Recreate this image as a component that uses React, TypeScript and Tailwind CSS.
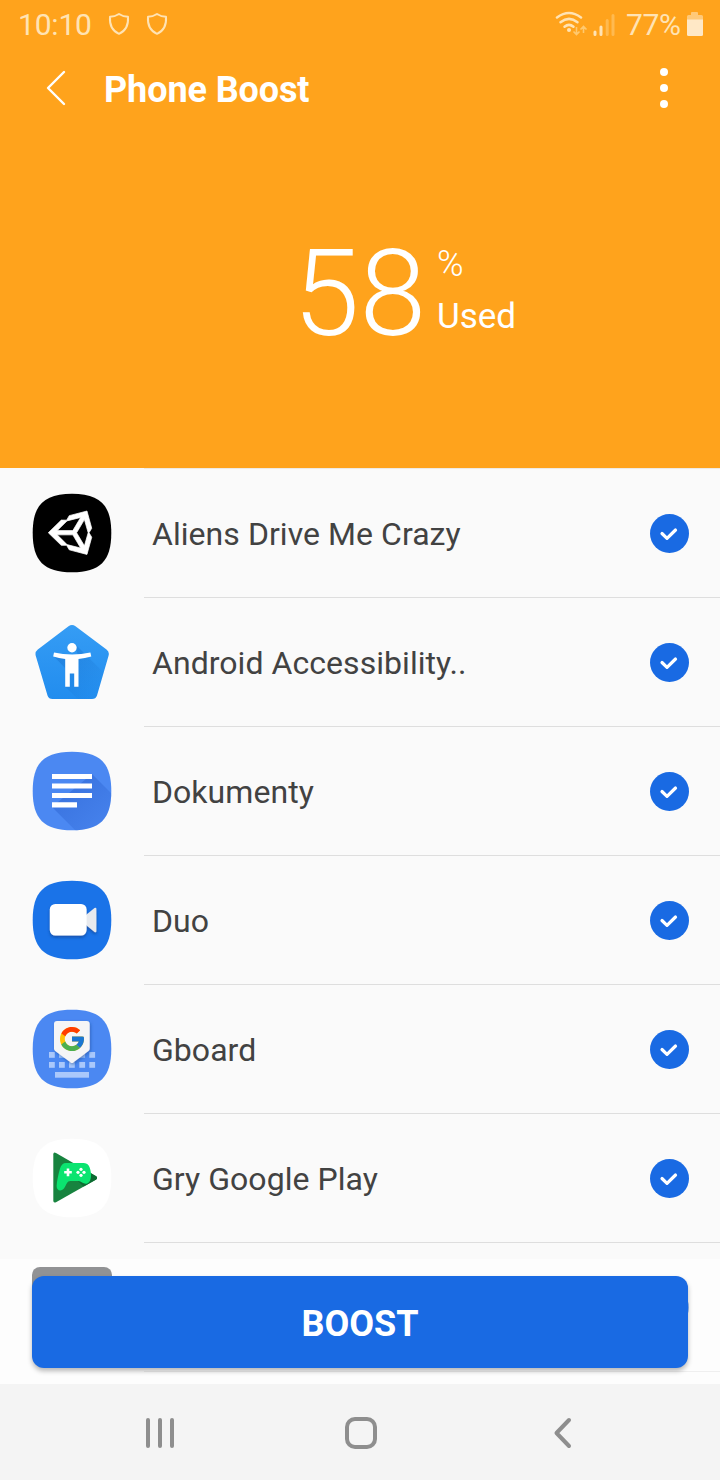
import type { ReactNode } from "react";
import { FcGoogle } from "react-icons/fc";

const SQUIRCLE =
  "M40 .7C68 .7 79.3 12 79.3 40S68 79.3 40 79.3.7 68 .7 40 12 .7 40 .7Z";

const UnityIcon = () => (
  <svg className="size-20" viewBox="0 0 80 80">
    <path d={SQUIRCLE} fill="#000" />
    <path
      transform="translate(14.9 16.7) scale(.09)"
      fill="#fff"
      stroke="#fff"
      strokeWidth="8"
      d="M498.11,206.4,445.31,14.72,248.2,66.08,219,116.14l-59.2-.43L15.54,256,159.82,396.32l59.17-.43,29.24,50,197.08,51.36,52.8-191.62-30-49.63ZM223.77,124.2,374.55,86.51,288,232.33H114.87Zm0,263.63L114.87,279.71H288l86.55,145.81Zm193,14L330.17,256l86.58-145.84L458.56,256Z"
    />
  </svg>
);

const AccessibilityIcon = () => (
  <svg className="size-20" viewBox="0 0 80 80">
    <defs>
      <linearGradient id="a11y-bg" x1="0" y1="0" x2="0" y2="1">
        <stop offset="0" stopColor="#369df5" />
        <stop offset="1" stopColor="#218cee" />
      </linearGradient>
      <linearGradient id="a11y-shade" x1="0" y1="0" x2="1" y2="1">
        <stop offset="0" stopColor="#1266c2" stopOpacity=".45" />
        <stop offset=".8" stopColor="#1266c2" stopOpacity="0" />
      </linearGradient>
      <clipPath id="a11y-clip">
        <path d="M36.5 4.3Q40 1.8 43.5 4.3L74.5 27.5Q77.8 30 76.5 34L65 73.5Q63.8 77 60 77H20.5Q16.7 77 15.5 73.5L3.8 34Q2.6 30 5.8 27.5Z" />
      </clipPath>
    </defs>
    <g clipPath="url(#a11y-clip)">
      <path d="M0 0H80V80H0Z" fill="url(#a11y-bg)" />
      <path d="M43 22 80 59V80H49L33 64.7V46L21.7 34.3H46Z" fill="url(#a11y-shade)" />
    </g>
    <circle cx="40" cy="25.7" r="4.7" fill="#fff" />
    <path
      fill="#fff"
      d="M22 30.6Q40 34.6 58.4 30.6L59.3 34.5Q53 36.2 46.5 37V64.7H42.2V51.5H37.8V64.7H33.2V37Q27 36.2 21.2 34.5Z"
    />
  </svg>
);

const DocsIcon = () => (
  <svg className="size-20" viewBox="0 0 80 80">
    <defs>
      <linearGradient id="docs-shade" x1="0" y1="0" x2="1" y2="1">
        <stop offset="0" stopColor="#3169d6" stopOpacity=".8" />
        <stop offset="1" stopColor="#3169d6" stopOpacity=".15" />
      </linearGradient>
      <clipPath id="docs-clip">
        <path d={SQUIRCLE} />
      </clipPath>
    </defs>
    <g clipPath="url(#docs-clip)">
      <path d="M0 0H80V80H0Z" fill="#4b88f2" />
      <path d="M60 23 80 43V80H44L20 56Z" fill="url(#docs-shade)" />
    </g>
    <path d="M20 23H60V28H20ZM20 32.4H60V37.5H20ZM20 42H60V47H20ZM20 51.3H45V56.4H20Z" fill="#fff" />
  </svg>
);

const DuoIcon = () => (
  <svg className="size-20" viewBox="0 0 80 80">
    <defs>
      <filter id="duo-shadow" x="-20%" y="-20%" width="140%" height="150%">
        <feDropShadow dx="0" dy="2" stdDeviation="1.6" floodColor="#0b3a85" floodOpacity=".6" />
      </filter>
    </defs>
    <path d={SQUIRCLE} fill="#1a73e8" />
    <g filter="url(#duo-shadow)">
      <path d="M54 35 62.5 28Q64.4 27 64.4 29V51Q64.4 53 62.5 52L54 45Z" fill="#e8eaee" />
      <rect x="17.8" y="24" width="36.8" height="31.5" rx="5.5" fill="#fff" />
    </g>
  </svg>
);

const GboardIcon = () => (
  <svg className="size-20" viewBox="0 0 80 80">
    <defs>
      <filter id="pin-shadow" x="-20%" y="-20%" width="150%" height="150%">
        <feDropShadow dx="1" dy="1.5" stdDeviation="1.5" floodColor="#17458f" floodOpacity=".5" />
      </filter>
    </defs>
    <path d={SQUIRCLE} fill="#4b88f2" />
    <g fill="#aac8fb">
      {[17, 27, 37, 47.3, 57.3].map((x) => (
        <g key={x}>
          <rect x={x} y="43" width="5.8" height="5.8" />
          <rect x={x} y="53" width="5.8" height="5.8" />
        </g>
      ))}
      <rect x="23" y="63" width="34" height="5.7" />
    </g>
    <path
      d="M25 12H54.7Q57.7 12 57.7 15V39.5Q57.7 41 56.5 42L41.3 53.6Q40 54.6 38.7 53.6L23.2 42Q22 41 22 39.5V15Q22 12 25 12Z"
      fill="#f5f5f6"
      filter="url(#pin-shadow)"
    />
    <FcGoogle x="25.6" y="15.6" size={28.8} />
  </svg>
);

const PlayGamesIcon = () => (
  <svg className="size-20" viewBox="0 0 80 80">
    <defs>
      <clipPath id="play-clip">
        <path d="M21.3 16.5Q21.3 13.5 24 15L64.2 38.3Q66 40 64.2 41.4L24 64.2Q21.3 65.5 21.3 62.5Z" />
      </clipPath>
    </defs>
    <path d={SQUIRCLE} fill="#fff" />
    <g clipPath="url(#play-clip)">
      <path d="M0 0H80V80H0Z" fill="#17833f" />
      <path d="M46 43 54 51 66 44V34H58Z" fill="#0d6b32" />
    </g>
    <path
      d="M34 25H51.5C56.5 25 58.3 29 58.9 35 59.5 40.5 58 45 54.5 45.7 51 46.2 49.5 43 46.5 43H38.5C35 43 34.5 46.5 32.3 50 30 53.5 24.6 53.5 24.6 48 24.8 43 26.5 36 28 30.5 29 27 31 25 34 25Z"
      fill="#0be470"
    />
    <path d="M34.7 30.5H37.3V33H39.8V35.6H37.3V38.2H34.7V35.6H32.2V33H34.7Z" fill="#fff" />
    <g fill="#fff">
      <circle cx="49" cy="31.3" r="1.6" />
      <circle cx="49" cy="37.3" r="1.6" />
      <circle cx="46" cy="34.3" r="1.6" />
      <circle cx="52" cy="34.3" r="1.6" />
    </g>
  </svg>
);

const apps: { name: string; icon: ReactNode }[] = [
  { name: "Aliens Drive Me Crazy", icon: <UnityIcon /> },
  { name: "Android Accessibility..", icon: <AccessibilityIcon /> },
  { name: "Dokumenty", icon: <DocsIcon /> },
  { name: "Duo", icon: <DuoIcon /> },
  { name: "Gboard", icon: <GboardIcon /> },
  { name: "Gry Google Play", icon: <PlayGamesIcon /> },
  { name: "", icon: <div className="size-20 rounded-lg bg-[#232529]" /> },
];

const Shield = () => (
  <svg className="h-6 w-[22px]" viewBox="0 0 22 24" fill="none" stroke="#ffe3b4" strokeWidth="2">
    <path d="M11 2Q15 4.6 20 4.8C20.6 13 17.5 19 11 21.8 4.5 19 1.4 13 2 4.8Q7 4.6 11 2Z" strokeLinejoin="round" />
  </svg>
);

const StatusBar = () => (
  <div className="flex h-12 items-center justify-between pr-4 pl-[18px] text-[#ffe3b4]">
    <div className="flex items-center">
      <span className="w-[90px] pt-0.5 text-[30px] leading-none tracking-[-0.2px]">10:10</span>
      <div className="flex gap-4">
        <Shield />
        <Shield />
      </div>
    </div>
    <div className="flex items-center">
      <svg className="h-8 w-[73px]" viewBox="0 0 73 32" fill="none">
        <g stroke="#ffe3b4" strokeWidth="2.5" strokeLinecap="round">
          <path d="M4 9.5Q16 .5 28 9.5" />
          <path d="M7.5 14.3Q16 7.5 24.5 14.3" />
          <path d="M11.5 18.8Q16 15 20.5 18.800" />
        </g>
        <circle cx="16" cy="22" r="2" fill="#ffe3b4" />
        <g stroke="#ffc96f" strokeWidth="1.6">
          <path d="M23.5 19V26M20.5 23.5 23.5 26.5 26.5 23.5M30.500 25V18.5M27.5 21.5 30.5 18.5 33.5 21.5" />
        </g>
        <g strokeWidth="3" strokeLinecap="round">
          <path d="M42 24V26.5M48 19V26.5" stroke="#ffe3b4" />
          <path d="M54.2 12.500V26.5M60 7.5V26.5" stroke="#ffba50" />
        </g>
      </svg>
      <span className="w-[60px] pt-0.5 text-[30px] leading-none tracking-[-0.4px]">77%</span>
      <svg className="h-6 w-[18px]" viewBox="0 0 18 24">
        <path d="M5 1Q5 0 6 0H11Q12 0 12 1V3H15.5Q17 3 17 4.5V8H1V4.5Q1 3 2.5 3H5Z" fill="#ffc978" />
        <path d="M1 7.5H17V22.5Q17 24 15.5 24H2.5Q1 24 1 22.5Z" fill="#ffe8c6" />
      </svg>
    </div>
  </div>
);

const AppRow = ({ name, icon }: { name: string; icon: ReactNode }) => (
  <li className="flex h-[129px] pl-8">
    <div className="flex w-28 shrink-0 items-center pb-0.5">{icon}</div>
    <div className="flex flex-1 items-center justify-between border-b border-[#dedede] pr-[31px] pl-2">
      <span className="pt-0.5 text-[32px] leading-10 tracking-[0.05px] text-[#424242]">{name}</span>
      <svg className="size-[39px]" viewBox="0 0 39 39">
        <circle cx="19.5" cy="19.5" r="19.5" fill="#196ae3" />
        <path
          d="M12 19.5 17 24.3 25.5 16"
          fill="none"
          stroke="#fff"
          strokeWidth="3.2"
          strokeLinecap="round"
          strokeLinejoin="round"
        />
      </svg>
    </div>
  </li>
);

const App = () => {
  return (
    <div className="flex h-[1480px] w-[720px] flex-col overflow-hidden bg-[#fafafa] font-[Roboto,sans-serif]">
      <header className="h-[468px] shrink-0 bg-[#ffa31c] text-white">
        <StatusBar />
        <div className="flex h-20 items-center pr-[52px] pl-[44px]">
          <svg className="h-10 w-6" viewBox="0 0 24 40" fill="none" stroke="#fff" strokeWidth="2.4" strokeLinecap="round" strokeLinejoin="round">
            <path d="M20 4 4 20 20 36" />
          </svg>
          <h1 className="ml-9 flex-1 pt-1 text-[36px] leading-10 font-bold tracking-[-0.1px]">Phone Boost</h1>
          <svg className="h-10 w-2" viewBox="0 0 8 40" fill="#fff">
            <circle cx="4" cy="4" r="4" />
            <circle cx="4" cy="20" r="4" />
            <circle cx="4" cy="36" r="4" />
          </svg>
        </div>
        <div className="flex pt-[105px] pl-[293px]">
          <span className="w-[136px] text-[120px] leading-[122px] font-light">58</span>
          <div className="flex flex-col pt-[5px] pl-2">
            <span className="text-[36px] leading-[52px] font-light">%</span>
            <span className="text-[35px] leading-[54px]">Used</span>
          </div>
        </div>
      </header>

      <main className="relative h-[916px] overflow-hidden">
        <div className="ml-36 h-px bg-[#eeeae4]" />
        <ul>
          {apps.map((app, i) => (
            <AppRow key={i} {...app} />
          ))}
        </ul>
        {/* the action bar floats over the list */}
        <div className="absolute inset-x-0 bottom-0 h-[125px] bg-white/50 px-8 pt-[17px]">
          <button className="h-[92px] w-full rounded-xl bg-[#196ae3] pt-1 text-[36px] font-bold text-white shadow-[0_3px_5px_rgba(0,0,0,0.28)]">
            BOOST
          </button>
        </div>
      </main>

      <nav className="h-24 bg-[#f4f4f4]">
        <svg className="h-24 w-[720px]" viewBox="0 0 720 96" fill="none" stroke="#8e8e8e" strokeWidth="4" strokeLinecap="round" strokeLinejoin="round">
          <path d="M148 36V62M160 36V62M172 36V62" />
          <rect x="347" y="35" width="28" height="28" rx="8" />
          <path d="M569 36 556.5 49 569 62" />
        </svg>
      </nav>
    </div>
  );
};

export default App;
